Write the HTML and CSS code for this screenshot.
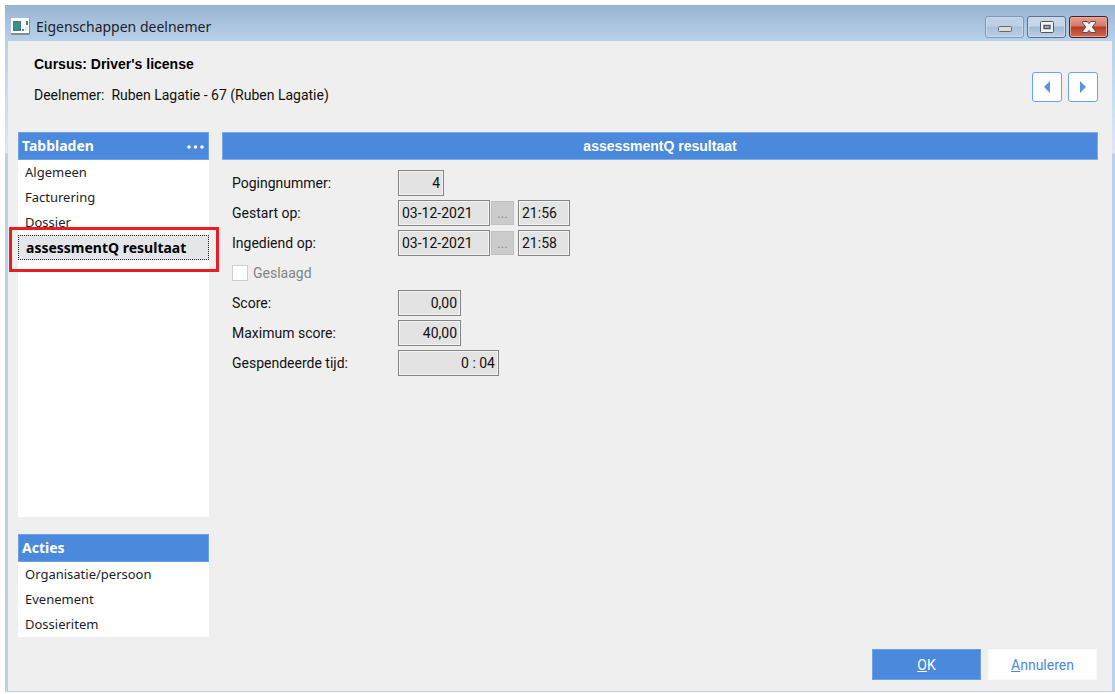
FILE: index.html
```html
<!DOCTYPE html>
<html lang="nl">
<head>
<meta charset="utf-8">
<meta name="viewport" content="width=device-width, initial-scale=1">
<title>Eigenschappen deelnemer</title>
<link rel="stylesheet" href="styles.css">
</head>
<body>
<div class="window">
  <header class="titlebar">
    <svg class="app-icon" width="19" height="17" viewBox="0 0 19 17" aria-hidden="true">
      <rect x="0" y="1" width="19" height="16" rx="1" fill="#858b94"/>
      <rect x="0" y="0" width="18" height="15" fill="#fbfcfd"/>
      <rect x="2" y="3" width="8" height="10" fill="#3f76a8"/>
      <path d="M3 4h6v7L3 12z" fill="#3f8f80"/>
      <rect x="11" y="11" width="2" height="2" fill="#76828f"/>
      <rect x="15" y="3" width="2" height="4" fill="#4779ae"/>
      <rect x="14" y="9" width="2" height="4" fill="#dde5ec"/>
    </svg>
    <h1 class="window-title">Eigenschappen deelnemer</h1>
    <div class="window-controls">
      <button class="control control-min" type="button" aria-label="Minimaliseren">
        <svg width="14" height="6" viewBox="0 0 14 6"><rect x=".5" y=".5" width="13" height="5" rx="1" fill="#dcdcd6" stroke="#656a72"/></svg>
      </button>
      <button class="control control-max" type="button" aria-label="Maximaliseren">
        <svg width="14" height="12" viewBox="0 0 14 12"><rect x=".5" y=".5" width="13" height="11" rx="1" fill="#f2f3f3" stroke="#50545e"/><rect x="4" y="4.500" width="6" height="3" fill="#a9bdd5" stroke="#50545e" stroke-width="1.400"/></svg>
      </button>
      <button class="control control-close" type="button" aria-label="Sluiten">
        <svg width="14" height="12" viewBox="0 0 14 12"><path d="M.5.5h4.800L7 2.600 8.700.5h4.800v1.300L10.300 6l3.200 4.200v1.300H8.700L7 9.400l-1.700 2.100H.5v-1.300L3.700 6 .5 1.800z" fill="#f1f1f1" stroke="#5e4650"/></svg>
      </button>
    </div>
  </header>
  <main class="dialog">
    <section class="intro">
      <div class="intro-text">
        <h2 class="course">Cursus: Driver's license</h2>
        <p class="participant">Deelnemer:&nbsp; Ruben Lagatie - 67 (Ruben Lagatie)</p>
      </div>
      <div class="pager">
        <button class="page-button" type="button" aria-label="Vorige"><svg width="6" height="12" viewBox="0 0 6 12"><path d="M6 0v12L0 6z" fill="#5b93e6"/></svg></button>
        <button class="page-button" type="button" aria-label="Volgende"><svg width="6" height="12" viewBox="0 0 6 12"><path d="M0 0v12l6-6z" fill="#5b93e6"/></svg></button>
      </div>
    </section>
    <div class="content">
      <aside class="sidebar">
        <nav class="panel panel-tabs" aria-labelledby="tabs-title">
          <div class="panel-header">
            <h3 class="panel-title" id="tabs-title">Tabbladen</h3>
            <button class="more" type="button" aria-label="Meer"><svg width="17" height="4" viewBox="0 0 17 4" fill="#fff"><circle cx="2" cy="2" r="1.800"/><circle cx="8.500" cy="2" r="1.800"/><circle cx="15" cy="2" r="1.800"/></svg></button>
          </div>
          <ul class="links">
            <li class="item"><a class="link" href="#">Algemeen</a></li>
            <li class="item"><a class="link" href="#">Facturering</a></li>
            <li class="item"><a class="link" href="#">Dossier</a></li>
            <li class="item item-marked"><a class="link link-selected" href="#" aria-current="page">assessmentQ resultaat</a></li>
          </ul>
        </nav>
        <nav class="panel" aria-labelledby="actions-title">
          <div class="panel-header"><h3 class="panel-title" id="actions-title">Acties</h3></div>
          <ul class="links">
            <li class="item"><a class="link" href="#">Organisatie/persoon</a></li>
            <li class="item"><a class="link" href="#">Evenement</a></li>
            <li class="item"><a class="link" href="#">Dossieritem</a></li>
          </ul>
        </nav>
      </aside>
      <section class="result">
        <h3 class="result-header">assessmentQ resultaat</h3>
        <form class="form">
          <div class="row">
            <label class="label" for="attempt">Pogingnummer:</label>
            <input class="field field-tiny number" id="attempt" value="4" readonly>
          </div>
          <div class="row">
            <label class="label" for="start-date">Gestart op:</label>
            <input class="field field-date" id="start-date" value="03-12-2021" readonly>
            <button class="picker" type="button" disabled aria-label="Startdatum kiezen">...</button>
            <input class="field field-time" value="21:56" readonly aria-label="Starttijd">
          </div>
          <div class="row">
            <label class="label" for="end-date">Ingediend op:</label>
            <input class="field field-date" id="end-date" value="03-12-2021" readonly>
            <button class="picker" type="button" disabled aria-label="Einddatum kiezen">...</button>
            <input class="field field-time" value="21:58" readonly aria-label="Eindtijd">
          </div>
          <div class="row">
            <input class="check" type="checkbox" id="passed" disabled>
            <label class="check-label" for="passed">Geslaagd</label>
          </div>
          <div class="row">
            <label class="label" for="score">Score:</label>
            <input class="field field-score number" id="score" value="0,00" readonly>
          </div>
          <div class="row">
            <label class="label" for="max-score">Maximum score:</label>
            <input class="field field-score number" id="max-score" value="40,00" readonly>
          </div>
          <div class="row">
            <label class="label" for="duration">Gespendeerde tijd:</label>
            <input class="field field-duration number" id="duration" value="0 : 04" readonly>
          </div>
        </form>
      </section>
    </div>
    <footer class="footer">
      <button class="button button-primary" type="button"><u>O</u>K</button>
      <button class="button" type="button"><u>A</u>nnuleren</button>
    </footer>
  </main>
</div>
</body>
</html>
```
FILE: styles.css
```css
* { box-sizing: border-box; }

body {
  margin: 0;
  padding: 5px 0 2px 5px;
  min-height: 100vh;
  display: flex;
  background: #fff;
  color: #111;
  font: 14px/20px Roboto, "Liberation Sans", sans-serif;
}

h1, h2, h3, p, ul { margin: 0; padding: 0; }
button, input { font: inherit; color: inherit; margin: 0; }
svg { display: block; }

.window {
  flex: 1;
  display: flex;
  flex-direction: column;
  padding: 0 3px 1px;
  background: linear-gradient(#99b4d1 0, #b9d1ea 36px, #dbe8f6 148px, #b9d1ea 149px, #b9d1ea 100%);
}

.titlebar {
  height: 36px;
  flex: none;
  display: flex;
  align-items: center;
  padding: 7px 4px 0 3px;
}

.window-title {
  margin-left: 6px;
  flex: 1;
  font: 14px/20px "Noto Sans", sans-serif;
  color: #1c1c28;
}

.window-controls { display: flex; gap: 3px; }

.control {
  width: 39px;
  height: 22px;
  display: flex;
  align-items: center;
  justify-content: center;
  padding: 0;
  border: 1px solid #8497ae;
  border-radius: 3px;
  background: linear-gradient(#bdd0e5 45%, #a9c1dc 50%, #b8cfe8);
  box-shadow: inset 0 0 0 1px #cbdaea;
}

.control-min { padding-top: 4px; }
.control-max { border-color: #5d7187; background: linear-gradient(#c6d7e9 45%, #a3bad4 50%, #bbd0e7); }
.control-close { border-color: #4e1c28; background: linear-gradient(#e5a08f, #d5796a 45%, #b63a22 50%, #cf6c51); box-shadow: inset 0 0 0 1px #e6aa9d; }

.dialog {
  flex: 1;
  display: flex;
  flex-direction: column;
  padding: 12px 14px 11px 10px;
  background: #efefef;
}

.intro {
  display: flex;
  justify-content: space-between;
  padding-left: 16px;
  height: 79px;
}

.intro-text { display: flex; flex-direction: column; gap: 10px; }
.course { font: bold 14px/22px "Liberation Sans", sans-serif; color: #000; }

.pager { display: flex; gap: 6px; padding-top: 19px; }

.page-button {
  width: 30px;
  height: 30px;
  display: grid;
  place-items: center;
  padding: 0;
  border: 1px solid #6ea0ec;
  border-radius: 3px;
  background: #fff;
}

.content { flex: 1; display: flex; gap: 13px; }
.sidebar { width: 191px; display: flex; flex-direction: column; gap: 17px; padding-bottom: 12px; }
.panel { background: #fff; font: 13px/25px "Noto Sans", sans-serif; }
.panel-tabs { flex: 1; }

.panel-header {
  height: 28px;
  display: flex;
  align-items: center;
  justify-content: space-between;
  padding: 0 4px 0 3px;
  border: 1px solid #6fa0e3;
  background: #4b89dc;
  color: #fff;
}

.panel-title { font: bold 14px/20px "Noto Sans", sans-serif; }
.more { padding: 2px 0 0; border: 0; background: none; }

.links { list-style: none; }
.item { height: 25px; }
.item-marked { position: relative; }
.item-marked::after {
  content: "";
  position: absolute;
  inset: -8px -10px -12px -9px;
  border: 3px solid #ec1c24;
}

.link { display: block; padding: 0 7px; color: #1c1c28; text-decoration: none; }
.link-selected {
  border: 1px dotted #222;
  background: #e4e6ea;
  color: #000;
  font-size: 14px;
  font-weight: bold;
  line-height: 23px;
}

.result { flex: 1; }

.result-header {
  height: 28px;
  border: 1px solid #7fabe8;
  background: #4b89dc;
  color: #fff;
  font: bold 14px/26px "Liberation Sans", sans-serif;
  text-align: center;
}

.form { display: flex; flex-direction: column; gap: 4px; padding: 10px; }
.row { height: 26px; display: flex; align-items: center; }
.label { width: 166px; color: #111; }

.field {
  height: 26px;
  padding: 0 3px;
  border: 1px solid #838383;
  border-radius: 0;
  outline: 0;
  background: #e3e3e3;
  box-shadow: inset 0 0 0 1px #f4f4f4;
}

.number { text-align: right; }
.field-tiny { width: 46px; }
.field-date { width: 92px; }
.field-time { width: 52px; }
.field-score { width: 63px; }
.field-duration { width: 101px; }

.picker {
  width: 23px;
  height: 24px;
  margin: 0 4px 0 1px;
  padding: 0;
  border: 1px solid #c1c1c1;
  background: #cbcbcb;
  color: #8c8c8c;
}

.check {
  appearance: none;
  width: 16px;
  height: 16px;
  border: 1px solid #ccc;
  background: #fff;
}

.check-label { margin-left: 5px; color: #838383; }

.footer { display: flex; justify-content: flex-end; gap: 7px; padding-right: 1px; }

.button {
  width: 109px;
  height: 31px;
  padding: 0;
  border: 1px solid #fafafa;
  background: #fff;
  color: #4b89dc;
}

.button-primary { border-color: #6ea0e6; background: #4b89dc; color: #fff; }
```
